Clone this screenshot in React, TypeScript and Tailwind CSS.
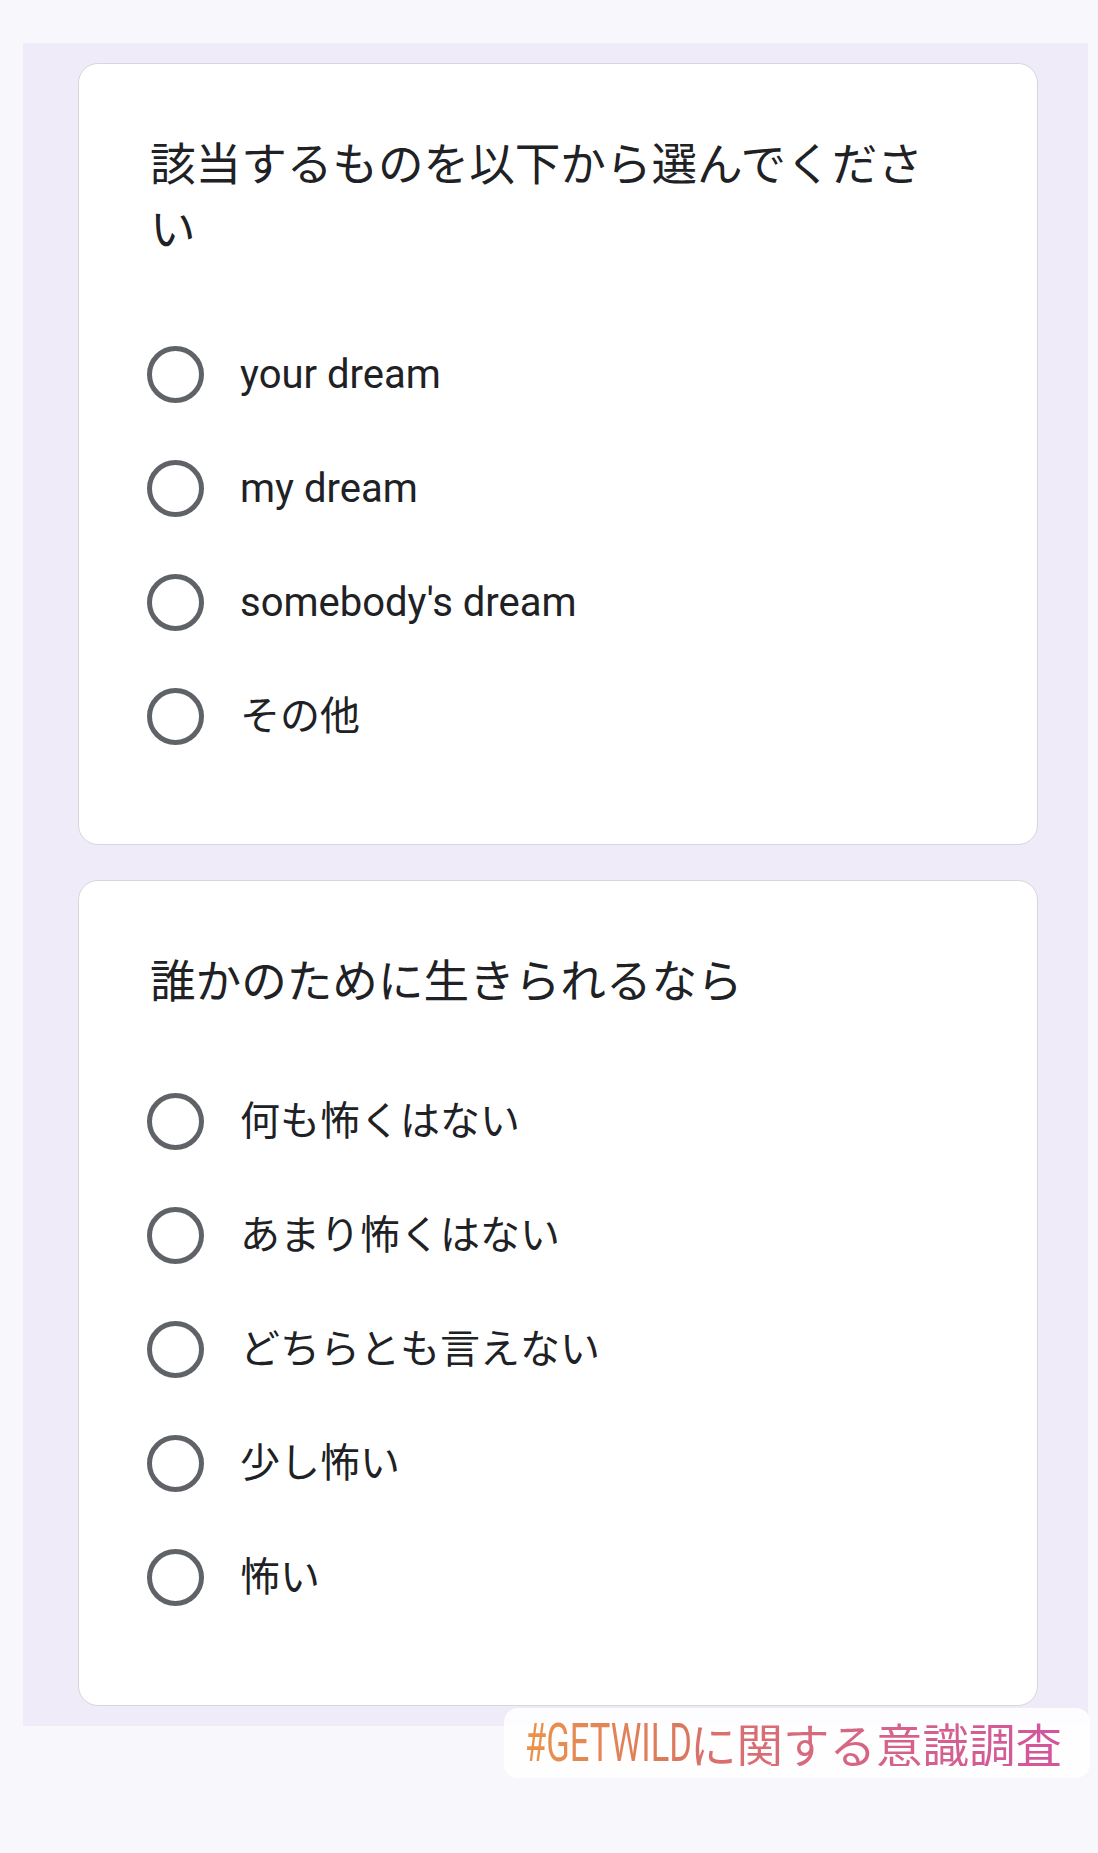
import React from "react";

type Question = {
  title: string;
  options: string[];
  titleGap: string;
};

const questions: Question[] = [
  {
    title: "該当するものを以下から選んでください",
    options: ["your dream", "my dream", "somebody's dream", "その他"],
    titleGap: "mb-[54px]",
  },
  {
    title: "誰かのために生きられるなら",
    options: ["何も怖くはない", "あまり怖くはない", "どちらとも言えない", "少し怖い", "怖い"],
    titleGap: "mb-[49px]",
  },
];

function QuestionCard({ q }: { q: Question }) {
  return (
    <div className="bg-white border border-[#d6d6dc] rounded-[20px] px-[71px] pt-[69px] pb-[71px]">
      <h2 className={`text-[45.6px] leading-[65px] text-[#202124] font-normal ${q.titleGap}`}>{q.title}</h2>
      <div className="flex flex-col">
        {q.options.map((opt) => (
          <label key={opt} className="h-[114px] flex items-center -ml-[3px] cursor-pointer">
            <span className="w-[57px] h-[57px] rounded-full border-[5.7px] border-[#5f6368] shrink-0" />
            <span className="ml-[36px] text-[40px] leading-[57px] text-[#202124]">{opt}</span>
          </label>
        ))}
      </div>
    </div>
  );
}

export default function App() {
  return (
    <div
      className="relative min-h-[1853px] bg-[#f8f7fb] pt-[43px]"
      style={{ fontFamily: 'Roboto, "Noto Sans CJK JP", sans-serif' }}
    >
      <div className="ml-[23px] w-[1065px] bg-[#efebf8] pt-[20px] pb-[20px] pl-[55px] pr-[50px] flex flex-col gap-[35px]">
        {questions.map((q) => (
          <QuestionCard key={q.title} q={q} />
        ))}
      </div>

      {/* sticker overlay */}
      <div className="absolute left-[504px] top-[1708px] w-[586px] h-[70px] bg-white/85 rounded-[14px] flex items-center pl-[21px]">
        <span className="inline-block w-[165px] whitespace-nowrap">
          <span className="inline-block origin-left scale-x-[0.64] text-[54px] leading-none bg-linear-to-r from-[#ea934b] to-[#da7560] bg-clip-text text-transparent">
            #GETWILD
          </span>
        </span>
        <span
          className="text-[46.5px] leading-none whitespace-nowrap bg-linear-to-r from-[#d9716a] to-[#d3549f] bg-clip-text text-transparent"
          style={{ fontFamily: '"Noto Sans CJK JP", sans-serif' }}
        >
          に関する意識調査
        </span>
      </div>
    </div>
  );
}
